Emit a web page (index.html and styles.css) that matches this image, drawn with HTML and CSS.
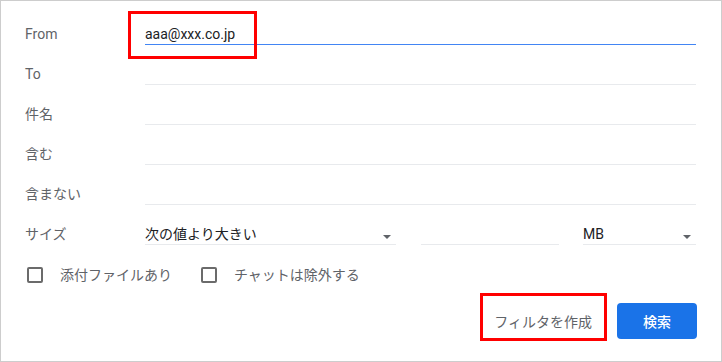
FILE: index.html
```html
<!DOCTYPE html>
<html lang="ja">
<head>
  <meta charset="UTF-8">
  <meta name="viewport" content="width=device-width, initial-scale=1.0">
  <title>検索オプション</title>
  <link rel="stylesheet" href="styles.css">
</head>
<body>

  <div class="panel">
    <div class="row">
      <label class="label">From</label>
      <div class="field field-active">aaa@xxx.co.jp</div>
    </div>
    <div class="row">
      <label class="label">To</label>
      <div class="field"></div>
    </div>
    <div class="row">
      <label class="label">件名</label>
      <div class="field"></div>
    </div>
    <div class="row">
      <label class="label">含む</label>
      <div class="field"></div>
    </div>
    <div class="row">
      <label class="label">含まない</label>
      <div class="field"></div>
    </div>
    <div class="row">
      <label class="label">サイズ</label>
      <div class="size-fields">
        <div class="field select select-op">次の値より大きい<span class="arrow"></span></div>
        <div class="field field-num"></div>
        <div class="field select select-unit">MB<span class="arrow"></span></div>
      </div>
    </div>

    <div class="checks">
      <label class="check"><span class="box"></span>添付ファイルあり</label>
      <label class="check"><span class="box"></span>チャットは除外する</label>
    </div>

    <div class="actions">
      <button class="btn btn-text">フィルタを作成</button>
      <button class="btn btn-primary">検索</button>
    </div>

    <!-- 注釈の赤枠 -->
    <div class="mark mark-from"></div>
    <div class="mark mark-filter"></div>
  </div>

</body>
</html>
```

FILE: styles.css
```css
body {
  margin: 0;
  padding: 0;
  background-color: #ffffff;
  font-family: Roboto, "Noto Sans CJK JP", sans-serif;
  font-size: 14px;
  color: #202124;
}

.panel {
  position: relative;
  box-sizing: border-box;
  width: 722px;
  height: 362px;
  border: 1px solid #cdcdcd;
  padding: 4px 25px 0 24px;
}

.row {
  display: grid;
  grid-template-columns: 120px 1fr;
  align-items: end;
  height: 40px;
}

.label {
  color: #5f6368;
  line-height: 20px;
  padding-bottom: 1px;
}

.field {
  position: relative;
  height: 20px;
  line-height: 20px;
  border-bottom: 1px solid #e8eaed;
  color: #202124;
}

.field-active {
  border-bottom-color: #4285f4;
}

.size-fields {
  display: flex;
  gap: 24px;
}

.select-op {
  width: 251px;
}

.field-num {
  width: 138px;
  margin-left: 1px;
}

.select-unit {
  flex: 1;
}

.arrow {
  position: absolute;
  right: 5px;
  top: 11px;
  width: 0;
  height: 0;
  border-top: 4px solid #5f6368;
  border-left: 4px solid transparent;
  border-right: 4px solid transparent;
}

.checks {
  display: flex;
  margin-top: 20px;
  height: 20px;
  align-items: center;
}

.check {
  display: flex;
  align-items: center;
  color: #5f6368;
  line-height: 20px;
}

.check + .check {
  margin-left: 27px;
}

.box {
  box-sizing: border-box;
  width: 16px;
  height: 16px;
  border: 2px solid #6b6b6b;
  border-radius: 2px;
  margin: 0 17px 0 2px;
}

.actions {
  display: flex;
  justify-content: flex-end;
  gap: 13px;
  margin-top: 18px;
  margin-right: -1px;
}

.btn {
  height: 36px;
  border: none;
  border-radius: 4px;
  font-family: inherit;
  font-size: 14px;
  cursor: pointer;
}

.btn-text {
  background: transparent;
  color: #5f6368;
  padding: 0 12px;
}

.btn-primary {
  width: 80px;
  background-color: #1a73e8;
  color: #ffffff;
  font-weight: 500;
}

/* 赤枠（注釈） */
.mark {
  position: absolute;
  box-sizing: border-box;
  border: 3px solid #ff0000;
  pointer-events: none;
}

.mark-from {
  left: 127px;
  top: 10px;
  width: 129px;
  height: 48px;
}

.mark-filter {
  left: 479px;
  top: 292px;
  width: 127px;
  height: 48px;
}
```
